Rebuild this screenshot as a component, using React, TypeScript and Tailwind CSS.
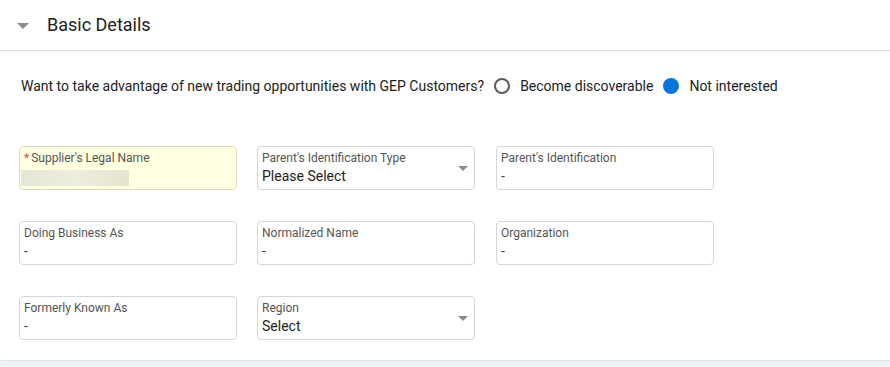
import React from "react";

function Field({ label, value, select, required, yellow, blurred }: { label: string; value?: string; select?: boolean; required?: boolean; yellow?: boolean; blurred?: boolean }) {
  return (
    <div className={`relative w-[218px] h-[44px] rounded-[4px] border ${yellow ? "bg-[#ffffe1] border-[#dedcc0]" : "bg-white border-[#d3d7dc]"} pl-[4px] pt-[4px]`}>
      <div className="text-[12px] leading-[14px] text-[#555] h-[16px]">
        {required && <span className="text-[#d9534f] mr-[2px]">*</span>}
        {label}
      </div>
      {blurred ? (
        <div className="mt-[3px] -ml-[3px] w-[108px] h-[16px] bg-gradient-to-r from-[#e6e6d6] via-[#eeeedd] to-[#e4e4cf]" />
      ) : (
        <div className={`${select ? "text-[14px] text-[#222]" : "text-[14px] text-[#444]"} leading-[18px]`}>{value}</div>
      )}
      {select && (
        <div className="absolute right-[6px] top-[19px] w-0 h-0 border-l-[5px] border-r-[5px] border-t-[5px] border-l-transparent border-r-transparent border-t-[#8a8a8a]" />
      )}
    </div>
  );
}

export default function App() {
  return (
    <div className="w-[890px] h-[367px] bg-[#eef1f5] overflow-hidden" style={{ fontFamily: "Roboto, 'Liberation Sans', sans-serif" }}>
      <div className="bg-white h-[361px] border-b border-[#e1e5ea] rounded-bl-[3px]">
        <div className="h-[51px] border-b border-[#dcdcdc] flex items-center pl-[17px]">
          <div className="w-0 h-0 border-l-[6px] border-r-[6px] border-t-[6px] border-l-transparent border-r-transparent border-t-[#8c8c8c] mt-[2px]" />
          <div className="ml-[18px] text-[18px] text-[#222] mt-[-2px]">Basic Details</div>
        </div>
        <div className="flex items-center h-[20px] mt-[25px] pl-[21px] text-[14px] text-[#222]">
          <span>Want to take advantage of new trading opportunities with GEP Customers?</span>
          <span className="ml-[10px] w-[16px] h-[16px] rounded-full border-[2px] border-[#5a5a5a]" />
          <span className="ml-[10px]">Become discoverable</span>
          <span className="ml-[10px] w-[16px] h-[16px] rounded-full bg-[#0b74da]" />
          <span className="ml-[10px]">Not interested</span>
        </div>
        <div className="pl-[19px] mt-[50px] grid grid-cols-[218px_218px_218px] gap-x-[20px] gap-y-[31px]">
          <Field label="Supplier's Legal Name" required yellow blurred />
          <Field label="Parent's Identification Type" value="Please Select" select />
          <div className="ml-[1px]"><Field label="Parent's Identification" value="-" /></div>
          <Field label="Doing Business As" value="-" />
          <Field label="Normalized Name" value="-" />
          <div className="ml-[1px]"><Field label="Organization" value="-" /></div>
          <Field label="Formerly Known As" value="-" />
          <Field label="Region" value="Select" select />
        </div>
      </div>
    </div>
  );
}
